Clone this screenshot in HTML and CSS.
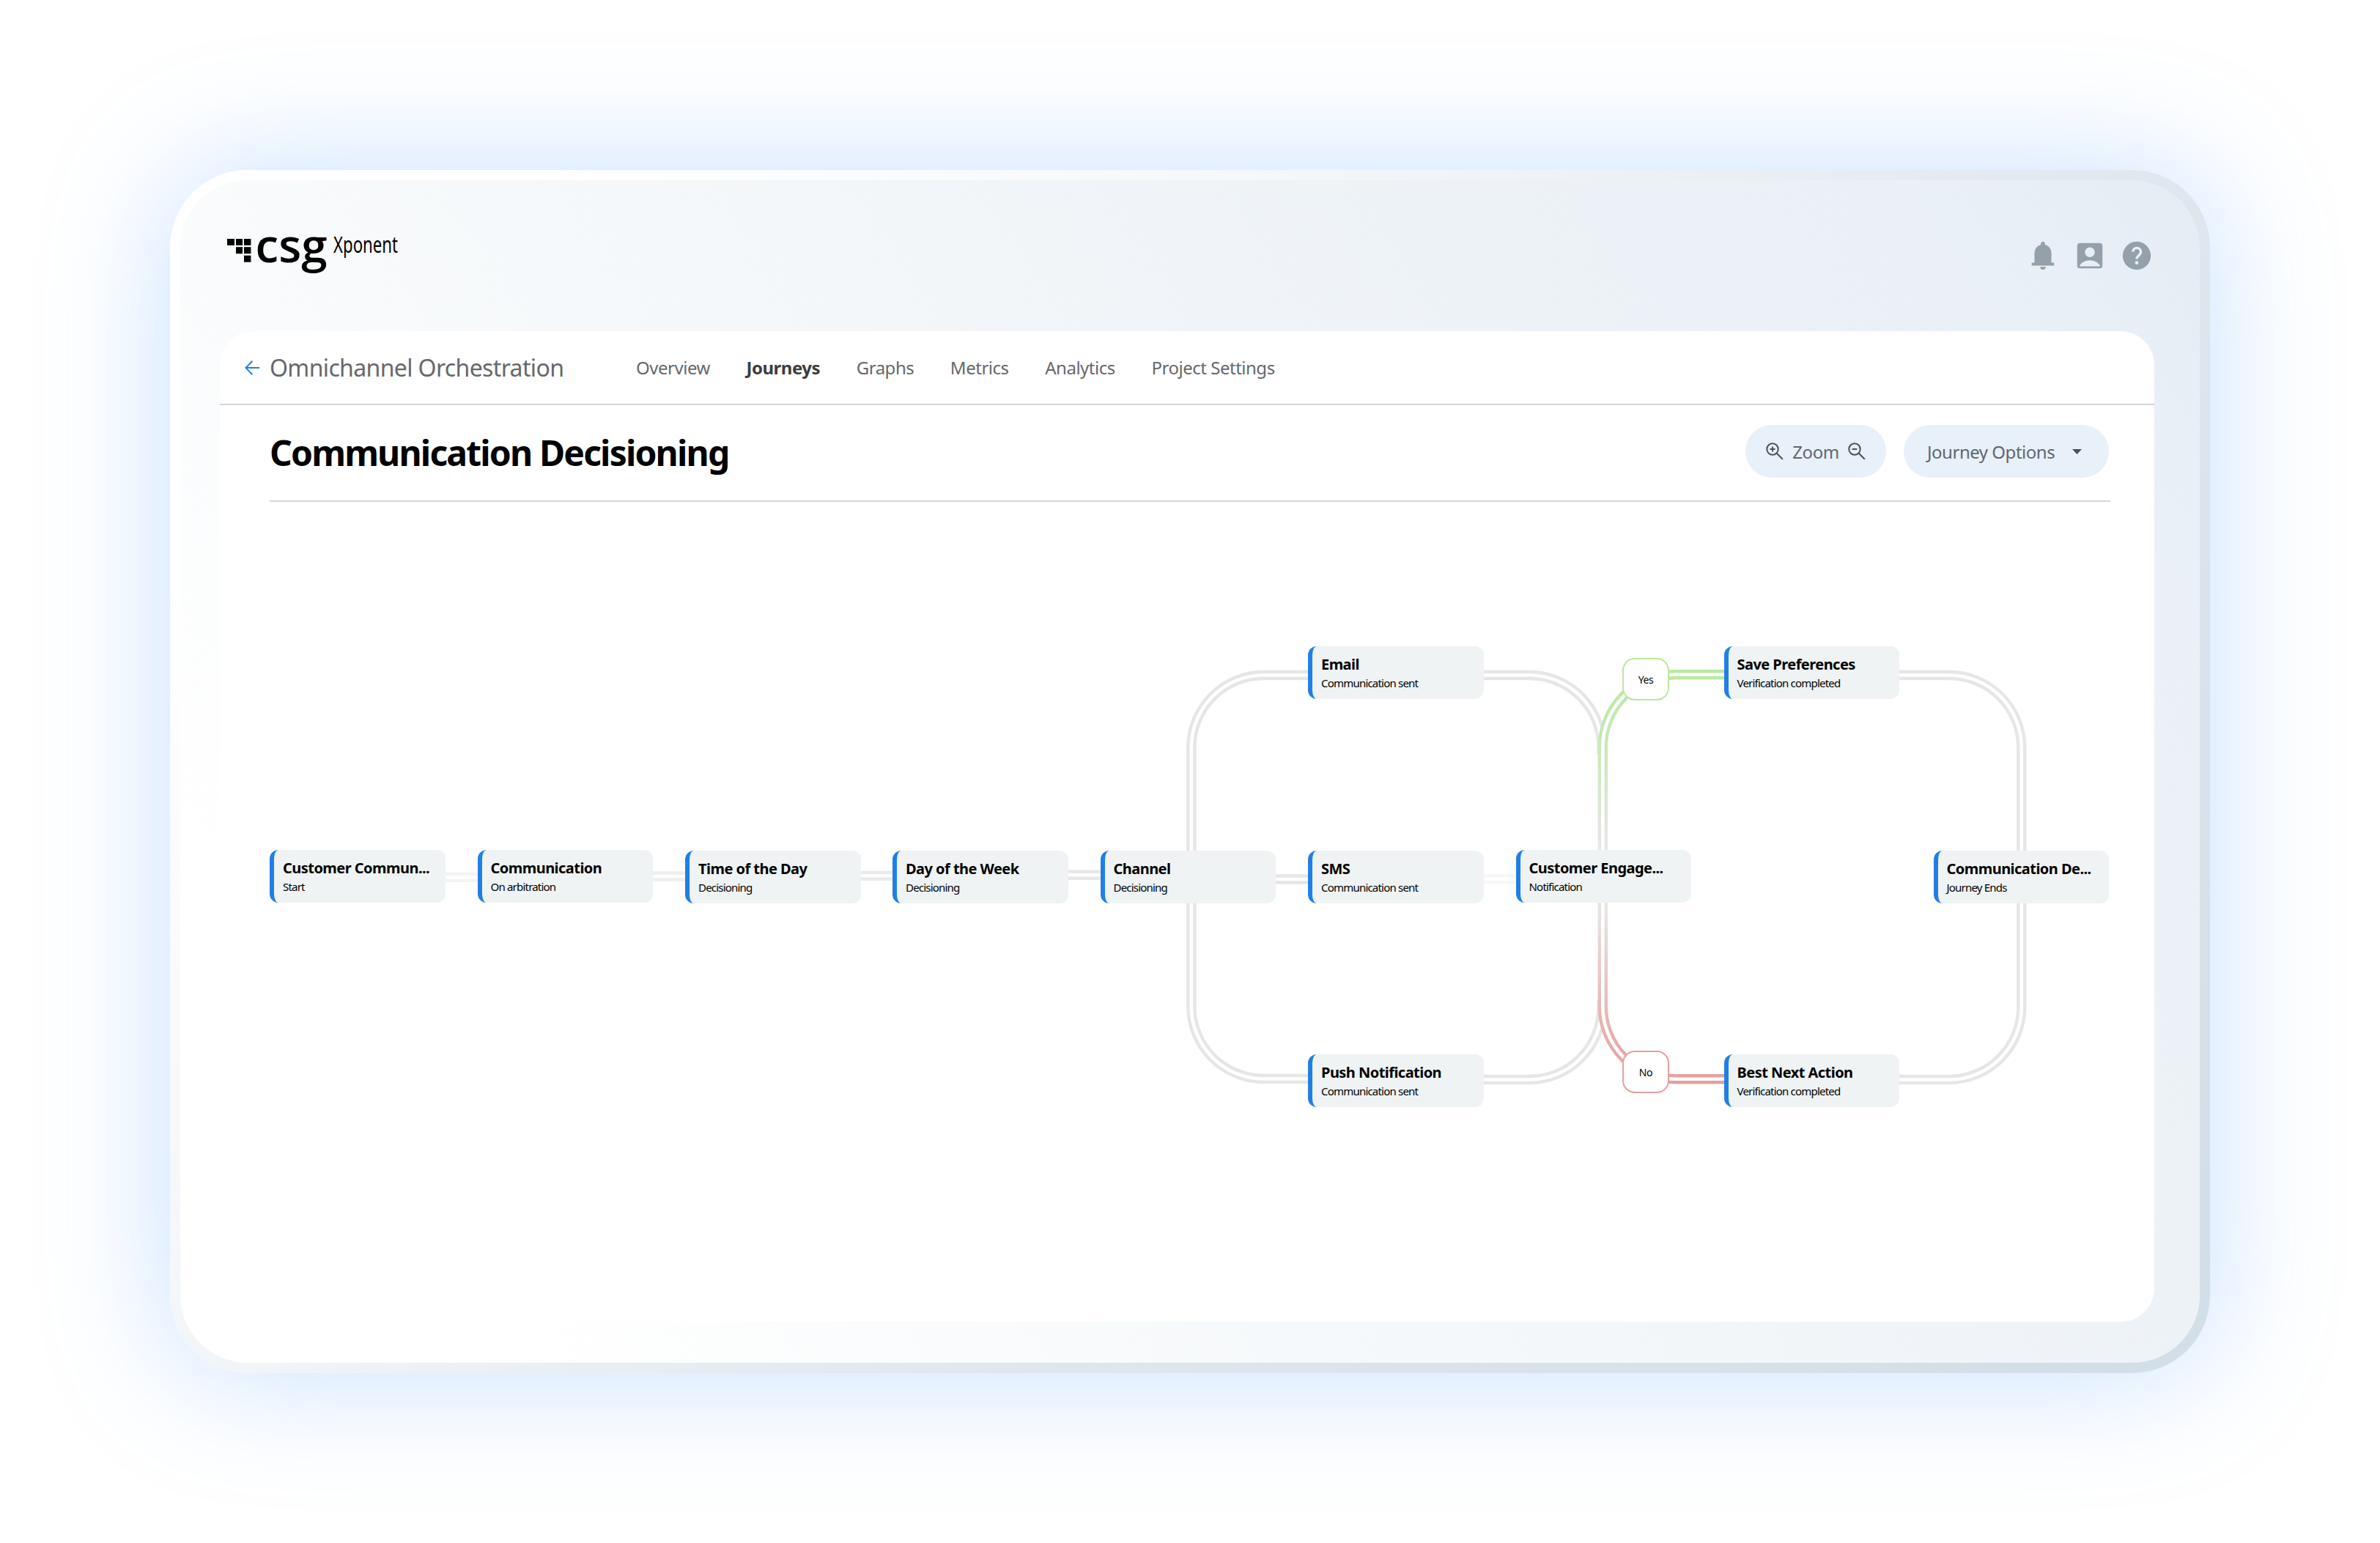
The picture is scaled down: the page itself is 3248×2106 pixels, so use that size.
FILE: index.html
```
<!DOCTYPE html>
<html lang="en">

<head>
    <meta charset="utf-8">
    <title>Communication Decisioning</title>
    <link rel="stylesheet" href="styles.css">
</head>

<body>

<div class="frame">
    <header class="topbar">
        <svg class="logo" width="240" height="100" viewBox="0 0 240 100">
            <rect x="0" y="27" width="10" height="8.8"/>
            <rect x="12" y="27" width="9" height="8.8"/>
            <rect x="23" y="27" width="9.4" height="8.8"/>
            <rect x="12" y="38.2" width="9" height="9"/>
            <rect x="23" y="38.2" width="9.4" height="9"/>
            <rect x="23" y="49.7" width="9.4" height="9"/>
            <text class="logo-name" x="38.5" y="59" textLength="98" lengthAdjust="spacingAndGlyphs">csg</text>
            <text class="logo-product" x="145" y="46" textLength="88" lengthAdjust="spacingAndGlyphs">Xponent</text>
        </svg>
        <div class="icons">
            <svg viewBox="0 0 24 24"><path d="M4 19v-2h2v-7q0-2.075 1.25-3.688T10.5 4.2v-.7q0-.625.438-1.062T12 2t1.063.438T13.5 3.5v.7q2 .5 3.25 2.113T18 10v7h2v2zm8 3q-.825 0-1.412-.587T10 20h4q0 .825-.587 1.413T12 22"/></svg>
            <svg viewBox="0 0 24 24"><path fill-rule="evenodd" d="M5 3h14a2 2 0 0 1 2 2v14a2 2 0 0 1-2 2H5a2 2 0 0 1-2-2V5a2 2 0 0 1 2-2zM12 6a3.5 3.5 0 1 0 0 7a3.5 3.5 0 0 0 0-7zM4.8 19.6H19.2V18.8Q16.5 15.3 12 15.3T4.8 18.8z"/></svg>
            <svg viewBox="0 0 24 24"><circle cx="12" cy="12" r="10"/><path class="mark" d="M9.3 9.2a2.8 2.8 0 1 1 4.6 2.2c-1.2 1-1.9 1.5-1.9 2.9"/><circle class="dot" cx="12" cy="17" r="1.25"/></svg>
        </div>
    </header>

    <main class="panel">
        <nav class="nav">
            <svg class="back" width="20" height="20" viewBox="0 0 20 20"><path d="M20 10H1.5M10.5 .8L1.3 10l9.2 9.2"/></svg>
            <span class="project">Omnichannel Orchestration</span>
            <a>Overview</a>
            <a class="active">Journeys</a>
            <a>Graphs</a>
            <a>Metrics</a>
            <a>Analytics</a>
            <a>Project Settings</a>
        </nav>

        <div class="title-row">
            <h1>Communication Decisioning</h1>
            <div class="pill zoom">
                <svg width="24" height="24" viewBox="0 0 24 24"><circle cx="9" cy="9" r="7.7"/><path d="M14.5 14.5l8.3 8.3M9 5.4v7.2M5.4 9h7.2"/></svg>
                <span>Zoom</span>
                <svg width="24" height="24" viewBox="0 0 24 24"><circle cx="9" cy="9" r="7.7"/><path d="M14.5 14.5l8.3 8.3M5.7 9h6.6"/></svg>
            </div>
            <div class="pill options">
                <span>Journey Options</span>
                <svg class="caret" width="13" height="7" viewBox="0 0 13 7"><path d="M0 0h13L6.5 7z"/></svg>
            </div>
        </div>

        <div class="canvas">
            <svg class="links" width="2640" height="1119" viewBox="0 0 2640 1119">
                <defs>
                    <linearGradient id="yes" gradientUnits="userSpaceOnUse" x1="0" y1="236" x2="0" y2="460">
                        <stop offset="0" stop-color="#b8e99e"/>
                        <stop offset=".4" stop-color="#c6eab3"/>
                        <stop offset="1" stop-color="#e7e5e6"/>
                    </linearGradient>
                    <linearGradient id="no" gradientUnits="userSpaceOnUse" x1="0" y1="560" x2="0" y2="790">
                        <stop offset="0" stop-color="#e7e4e4"/>
                        <stop offset=".55" stop-color="#e9b9b9"/>
                        <stop offset="1" stop-color="#e79e9e"/>
                    </linearGradient>
                    <path id="p1" d="M307 512.4h46"/>
                    <path id="p2" d="M590 511h46"/>
                    <path id="p3" d="M874 510.2h46"/>
                    <path id="p4" d="M1157 509.2h46"/>
                    <path id="p5" d="M1440 515h46"/>
                    <path id="p6" d="M1724 514.7h46"/>
                    <path id="p7" d="M1487 236.5H1424.8A99 99 0 0 0 1325.8 335.5V688.5A99 99 0 0 0 1424.8 787.5H1487"/>
                    <path id="p8" d="M1724 236.5H1787A99 99 0 0 1 1886 335.5V345"/>
                    <path id="p9" d="M1724 788.5H1787A99 99 0 0 0 1886 689.5V680"/>
                    <path id="p10" d="M2290 236.5H2359.8A99 99 0 0 1 2458.8 335.5V689.5A99 99 0 0 1 2359.8 788.5H2290"/>
                    <path id="p11" d="M2055 235.8H1986.3A99 99 0 0 0 1887.3 334.8V476"/>
                    <path id="p12" d="M2055 787.7H1986.3A99 99 0 0 1 1887.3 688.7V547"/>
                </defs>
                <use href="#p1" stroke="#f4f3f3"/><use href="#p1" class="gap"/>
                <use href="#p2" stroke="#efeeee"/><use href="#p2" class="gap"/>
                <use href="#p3" stroke="#ebe9ea"/><use href="#p3" class="gap"/>
                <use href="#p4" stroke="#e8e6e7"/><use href="#p4" class="gap"/>
                <use href="#p5" stroke="#e7e5e6"/><use href="#p5" class="gap"/>
                <use href="#p6" stroke="#f7f7f7"/><use href="#p6" class="gap"/>
                <use href="#p7" stroke="#e7e5e6"/><use href="#p7" class="gap"/>
                <use href="#p8" stroke="#e7e5e6"/><use href="#p8" class="gap"/>
                <use href="#p9" stroke="#e7e6e6"/><use href="#p9" class="gap"/>
                <use href="#p10" stroke="#e7e6e6"/><use href="#p10" class="gap"/>
                <use href="#p11" stroke="url(#yes)"/><use href="#p11" class="gap"/>
                <use href="#p12" stroke="url(#no)"/><use href="#p12" class="gap"/>
            </svg>

            <div class="node start"><b>Customer Commun...</b><span>Start</span></div>
            <div class="node arbitration"><b>Communication</b><span>On arbitration</span></div>
            <div class="node time"><b>Time of the Day</b><span>Decisioning</span></div>
            <div class="node day"><b>Day of the Week</b><span>Decisioning</span></div>
            <div class="node channel"><b>Channel</b><span>Decisioning</span></div>
            <div class="node email"><b>Email</b><span>Communication sent</span></div>
            <div class="node sms"><b>SMS</b><span>Communication sent</span></div>
            <div class="node push"><b>Push Notification</b><span>Communication sent</span></div>
            <div class="node engage"><b>Customer Engage...</b><span>Notification</span></div>
            <div class="node save"><b>Save Preferences</b><span>Verification completed</span></div>
            <div class="node best"><b>Best Next Action</b><span>Verification completed</span></div>
            <div class="node end"><b>Communication De...</b><span>Journey Ends</span></div>

            <div class="badge yes">Yes</div>
            <div class="badge no">No</div>
        </div>
    </main>
</div>

</body>

</html>
```

FILE: styles.css
```
* {
    margin: 0;
    box-sizing: border-box;
}

body {
    padding: 232px;
    background: #fff;
    font-family: "Noto Sans", "Open Sans", sans-serif;
    overflow: hidden;
}

.frame {
    width: 2784px;
    height: 1642px;
    padding: 0 62px 56px 54px;
    border: 14px solid transparent;
    border-radius: 106px;
    background:
        linear-gradient(55deg, #fff 12%, #f9fbfc 29%, #f3f7fa 50%, #edf2f7 72%, #eaf0f7 90%, #e6ecf4 100%) padding-box,
        linear-gradient(135deg, #fff 12%, #f3f6f9 37%, #dfe6ee 63%, #d3dfe8 95%) border-box;
    box-shadow: 0 0 170px rgba(100, 170, 255, 0.36);
}

/* top bar */
.topbar {
    display: flex;
    justify-content: space-between;
    align-items: center;
    height: 206px;
    padding: 0 1px 0 10px;
}

.logo {
    overflow: visible;
}

.logo-name {
    font-family: "Open Sans", sans-serif;
    font-size: 63px;
    font-weight: 600;
}

.logo-product {
    font-size: 30.5px;
}

.icons {
    display: flex;
    gap: 18px;
}

.icons svg {
    width: 46px;
    height: 46px;
    fill: #94a0aa;
}

.icons .mark {
    fill: none;
    stroke: #e9eff5;
    stroke-width: 1.7;
}

.icons .dot {
    fill: #e9eff5;
}

/* panel */
.panel {
    height: 1352px;
    border-radius: 46px;
    background: #fff;
}

.nav {
    display: flex;
    align-items: center;
    height: 101px;
    padding-left: 34px;
    border-bottom: 2px solid #d4d5d6;
    color: #66686b;
    font-size: 24px;
    letter-spacing: -0.02em;
}

.nav a {
    margin-right: 49.6px;
}

.nav .active {
    color: #3a3c3e;
    font-weight: 700;
}

.back {
    margin-right: 14px;
    fill: none;
    stroke: #2b80dd;
    stroke-width: 2;
}

.project {
    width: 500px;
    font-size: 32px;
    letter-spacing: -0.02em;
}

.title-row {
    display: flex;
    align-items: center;
    gap: 24px;
    height: 132px;
    margin: 0 60px 0 68px;
    padding: 0 2px 4px 0;
    border-bottom: 2px solid #d4d5d6;
}

h1 {
    flex: 1;
    padding-top: 3px;
    font-size: 48px;
    letter-spacing: -0.038em;
    line-height: 60px;
}

.pill {
    display: flex;
    align-items: center;
    height: 72px;
    border-radius: 36px;
    background: #e8f0fa;
    color: #5f666e;
    font-size: 24px;
    letter-spacing: -0.02em;
}

.pill svg {
    fill: none;
    stroke: #49525b;
    stroke-width: 2;
}

.zoom {
    justify-content: space-between;
    width: 192px;
    padding: 0 28px;
}

.options {
    justify-content: space-between;
    width: 280px;
    padding: 0 37px 0 32px;
}

.pill .caret {
    fill: #49525b;
    stroke: none;
}

/* journey canvas */
.canvas {
    position: relative;
    height: 1119px;
}

.links {
    display: block;
    fill: none;
    stroke-width: 13.4;
}

.links .gap {
    stroke: #fff;
    stroke-width: 4.6;
}

.node {
    position: absolute;
    width: 239.5px;
    height: 72px;
    padding: 11px 0 0 12px;
    border-left: 6px solid #217fe4;
    border-radius: 12px;
    background: #eff3f4;
    white-space: nowrap;
}

.node b {
    display: block;
    font-size: 20px;
    line-height: 28px;
    letter-spacing: -0.027em;
}

.node span {
    display: block;
    font-size: 15px;
    line-height: 23px;
    letter-spacing: -0.053em;
}

.start { left: 68px; top: 475px; }
.arbitration { left: 351.5px; top: 475px; }
.time { left: 635px; top: 476px; }
.day { left: 918px; top: 476px; }
.channel { left: 1201.5px; top: 476px; }
.email { left: 1485px; top: 197px; }
.sms { left: 1485px; top: 476px; }
.push { left: 1485px; top: 754px; }
.engage { left: 1768.5px; top: 475px; }
.save { left: 2052.5px; top: 197px; }
.best { left: 2052.5px; top: 754px; }
.end { left: 2338.5px; top: 476px; }

.badge {
    position: absolute;
    left: 1914px;
    width: 64px;
    height: 58px;
    border: 2px solid #b8e99e;
    border-radius: 17px;
    background: #fff;
    font-size: 14px;
    line-height: 56px;
    letter-spacing: -0.03em;
    text-align: center;
}

.badge.yes {
    top: 213px;
}

.badge.no {
    top: 749px;
    border-color: #e79e9e;
}
```
